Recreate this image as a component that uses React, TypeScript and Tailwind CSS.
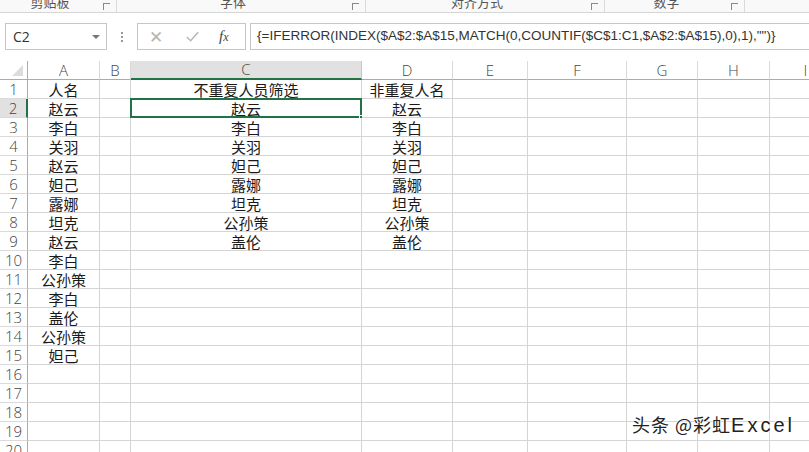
import React from 'react';

const COLS = [
  { key: 'A', cls: 'w-[72px]' },
  { key: 'B', cls: 'w-[31px]' },
  { key: 'C', cls: 'w-[231px]' },
  { key: 'D', cls: 'w-[91px]' },
  { key: 'E', cls: 'w-[75px]' },
  { key: 'F', cls: 'w-[99px]' },
  { key: 'G', cls: 'w-[71px]' },
  { key: 'H', cls: 'w-[72px]' },
  { key: 'I', cls: 'w-[72px]' },
];

const colA = ['人名', '赵云', '李白', '关羽', '赵云', '妲己', '露娜', '坦克', '赵云', '李白', '公孙策', '李白', '盖伦', '公孙策', '妲己'];
const colC = ['不重复人员筛选', '赵云', '李白', '关羽', '妲己', '露娜', '坦克', '公孙策', '盖伦'];
const colD = ['非重复人名', '赵云', '李白', '关羽', '妲己', '露娜', '坦克', '公孙策', '盖伦'];

const FORMULA = '{=IFERROR(INDEX($A$2:$A$15,MATCH(0,COUNTIF($C$1:C1,$A$2:$A$15),0),1),"")}';

const cjk = "font-['Noto_Sans_CJK_SC','Noto_Sans',sans-serif]";
const ui = "font-['Open_Sans','Noto_Sans',sans-serif]";

function cellValue(col: string, row: number) {
  if (col === 'A') return colA[row - 1] ?? '';
  if (col === 'C') return colC[row - 1] ?? '';
  if (col === 'D') return colD[row - 1] ?? '';
  return '';
}

function RibbonStrip() {
  const groups = [
    { label: '剪贴板', cls: 'w-[117px]' },
    { label: '字体', cls: 'w-[249px]' },
    { label: '对齐方式', cls: 'w-[239px]' },
    { label: '数字', cls: 'w-[140px]' },
  ];
  return (
    <div className="flex h-[13px] overflow-hidden border-b border-[#d5d5d5] bg-[#f9f9f9]">
      {groups.map((g) => (
        <div key={g.label} className={`relative flex shrink-0 justify-center border-r border-[#dadada] pr-[16px] ${g.cls}`}>
          <span className={`-mt-[7px] text-[13px] leading-[18px] text-[#555] ${cjk}`}>{g.label}</span>
          <span className="absolute right-[6px] top-[3px] h-[7px] w-[7px] border-l border-t border-[#888]" />
        </div>
      ))}
    </div>
  );
}

function FormulaBar() {
  return (
    <div className="flex h-[27px] items-stretch pl-[5px]">
      <div className="flex w-[102px] shrink-0 items-center justify-between border border-[#c6c6c6] bg-white pl-[7px] pr-[6px]">
        <span className={`text-[14px] text-[#333] ${ui}`}>C2</span>
        <span className="h-0 w-0 border-x-[4px] border-t-[4px] border-x-transparent border-t-[#777]" />
      </div>
      <div className="flex w-[30px] shrink-0 flex-col items-center justify-center gap-[2px]">
        <span className="h-[2px] w-[2px] bg-[#999]" />
        <span className="h-[2px] w-[2px] bg-[#999]" />
        <span className="h-[2px] w-[2px] bg-[#999]" />
      </div>
      <div className="flex w-[109px] shrink-0 items-center border border-[#c6c6c6] bg-white">
        <span className="ml-[10px] w-[16px] text-center text-[17px] leading-none text-[#b5b5b5]">✕</span>
        <span className="ml-[21px] w-[16px]">
          <svg viewBox="0 0 16 16" className="h-[15px] w-[15px]">
            <path d="M2 8.5 L6 12.5 L14 3.5" fill="none" stroke="#b5b5b5" strokeWidth="1.6" />
          </svg>
        </span>
        <span className="ml-[18px] font-['Liberation_Serif',serif] text-[15px] italic text-[#444]">
          f<span className="text-[12px]">x</span>
        </span>
      </div>
      <div className="ml-[4px] flex min-w-0 flex-1 items-center border-y border-l border-[#c6c6c6] bg-white pl-[6px]">
        <span className="whitespace-nowrap font-['Liberation_Sans',Arial,sans-serif] text-[13.5px] text-[#333]">
          {FORMULA}
        </span>
      </div>
    </div>
  );
}

function HeaderRow() {
  return (
    <div className="flex h-[19px]">
      <div className="relative w-[28px] shrink-0 border-b border-r border-[#ababab] bg-white">
        <span className="absolute bottom-[3px] right-[4px] h-0 w-0 border-b-[11px] border-l-[11px] border-b-[#dcdcdc] border-l-transparent" />
      </div>
      {COLS.map((c) => {
        const sel = c.key === 'C';
        return (
          <div
            key={c.key}
            className={`flex shrink-0 items-center justify-center border-r text-[15px] font-light ${ui} ${c.cls} ${
              sel
                ? 'border-b-2 border-r-[#c6c6c6] border-b-[#217346] bg-[#e1e1e1] text-[#444]'
                : 'border-b border-r-[#dadada] border-b-[#ababab] bg-white text-[#444]'
            }`}
          >
            {c.key}
          </div>
        );
      })}
    </div>
  );
}

function GridRow({ row }: { row: number }) {
  const selRow = row === 2;
  return (
    <div className="flex h-[19px]">
      <div
        className={`flex w-[28px] shrink-0 items-center justify-center border-b border-b-[#dadada] text-[15px] font-light text-[#444] ${ui} ${
          selRow ? 'border-r-2 border-r-[#217346] bg-[#e1e1e1]' : 'border-r border-r-[#ababab] bg-white'
        }`}
      >
        {row}
      </div>
      {COLS.map((c) => {
        const active = c.key === 'C' && row === 2;
        return (
          <div
            key={c.key}
            className={`relative flex shrink-0 items-center justify-center overflow-visible whitespace-nowrap border-b border-r border-[#d4d4d4] bg-white text-[15px] leading-none text-[#1a1a1a] ${cjk} ${c.cls}`}
          >
            {cellValue(c.key, row)}
            {active && (
              <>
                <span className="pointer-events-none absolute -left-[1px] -top-[1px] bottom-[-1px] right-[-1px] border-2 border-[#217346]" />
                <span className="absolute -bottom-[4px] -right-[4px] h-[6px] w-[6px] border border-white bg-[#217346]" />
              </>
            )}
          </div>
        );
      })}
    </div>
  );
}

export default function App() {
  const rows = Array.from({ length: 20 }, (_, i) => i + 1);
  return (
    <div className="relative h-[452px] w-[809px] overflow-hidden bg-white">
      <RibbonStrip />
      <div className="pt-[10px]">
        <FormulaBar />
      </div>
      <div className="mt-[11px]">
        <HeaderRow />
        {rows.map((r) => (
          <GridRow key={r} row={r} />
        ))}
      </div>
      <div
        className={`absolute bottom-[12px] right-[14px] flex items-baseline text-[18px] text-[#222] [text-shadow:0_0_2px_#fff,0_0_3px_#fff] ${cjk}`}
      >
        <span className="tracking-[1px]">头条 @彩虹</span>
        <span className="font-['Liberation_Sans',Arial,sans-serif] text-[20px] tracking-[3px]">Excel</span>
      </div>
    </div>
  );
}
